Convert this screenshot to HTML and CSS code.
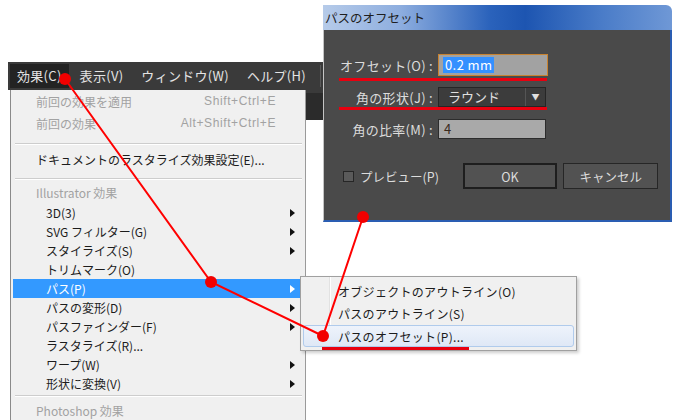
FILE: index.html
```html
<!DOCTYPE html>
<html lang="ja">

<head>
    <meta charset="UTF-8">
    <meta name="viewport" content="width=device-width, initial-scale=1.0">
    <title>パスのオフセット</title>
    <link rel="stylesheet" href="styles.css">
</head>

<body>
    <div class="stage">
        <div class="workspace">
            <div class="menubar">
                <span class="menubar-item active">効果(C)</span>
                <span class="menubar-item">表示(V)</span>
                <span class="menubar-item">ウィンドウ(W)</span>
                <span class="menubar-item">ヘルプ(H)</span>
                <span class="menubar-sep"></span>
            </div>
            <div class="under-bar">
                <div class="menu">
                    <div class="menu-item disabled first">
                        <span>前回の効果を適用</span><span class="shortcut">Shift+Ctrl+E</span>
                    </div>
                    <div class="menu-item disabled second">
                        <span>前回の効果</span><span class="shortcut">Alt+Shift+Ctrl+E</span>
                    </div>
                    <div class="menu-sep sep-a"></div>
                    <div class="menu-item">ドキュメントのラスタライズ効果設定(E)...</div>
                    <div class="menu-sep sep-b"></div>
                    <div class="menu-item heading">Illustrator 効果</div>
                    <div class="menu-item sub arrow first-sub">3D(3)</div>
                    <div class="menu-item sub arrow">SVG フィルター(G)</div>
                    <div class="menu-item sub arrow">スタイライズ(S)</div>
                    <div class="menu-item sub">トリムマーク(O)</div>
                    <div class="menu-item sub arrow selected">パス(P)</div>
                    <div class="menu-item sub arrow">パスの変形(D)</div>
                    <div class="menu-item sub arrow">パスファインダー(F)</div>
                    <div class="menu-item sub">ラスタライズ(R)...</div>
                    <div class="menu-item sub arrow">ワープ(W)</div>
                    <div class="menu-item sub arrow">形状に変換(V)</div>
                    <div class="menu-sep sep-c"></div>
                    <div class="menu-item heading">Photoshop 効果</div>
                </div>
                <div class="doc-strip"></div>
            </div>
        </div>

        <!-- submenu of パス(P) -->
        <div class="submenu">
            <div class="submenu-item">オブジェクトのアウトライン(O)</div>
            <div class="submenu-item">パスのアウトライン(S)</div>
            <div class="submenu-item hover">パスのオフセット(P)...</div>
        </div>

        <!-- offset dialog -->
        <div class="dialog">
            <div class="dialog-title">パスのオフセット</div>
            <div class="dialog-body">
                <div class="field-row row-offset">
                    <label class="field-label">オフセット(O) :</label>
                    <div class="text-field focused"><span class="selection">0.2 mm</span></div>
                </div>
                <div class="field-row row-join">
                    <label class="field-label">角の形状(J) :</label>
                    <div class="select-field">
                        <span class="select-value">ラウンド</span>
                        <span class="select-arrow">▼</span>
                    </div>
                </div>
                <div class="field-row row-limit">
                    <label class="field-label">角の比率(M) :</label>
                    <div class="text-field">4</div>
                </div>
                <div class="button-row">
                    <div class="preview">
                        <span class="checkbox"></span>
                        <span>プレビュー(P)</span>
                    </div>
                    <button class="dlg-button default">OK</button>
                    <button class="dlg-button">キャンセル</button>
                </div>
            </div>
        </div>

        <!-- red annotations drawn over the screenshot -->
        <svg class="marks" width="680" height="420" viewBox="0 0 680 420">
            <rect x="339" y="78" width="208" height="3" fill="#e8000f" />
            <rect x="339" y="107" width="208" height="3" fill="#e8000f" />
            <rect x="322" y="347" width="147" height="3" fill="#e8000f" />
            <polyline points="65,79 211,282 323,336 363,217" fill="none" stroke="#ff0000" stroke-width="2" />
            <circle cx="65" cy="79" r="6" fill="#f20000" />
            <circle cx="211" cy="282" r="6" fill="#f20000" />
            <circle cx="323" cy="336" r="6" fill="#f20000" />
            <circle cx="363" cy="217" r="6" fill="#f20000" />
        </svg>
    </div>
</body>

</html>
```

FILE: styles.css
```css
body {
    margin: 0;
    padding: 0;
    background-color: #fff;
    font-family: "Noto Sans CJK JP", "Noto Sans", sans-serif;
    font-size: 12px;
}

.stage {
    position: relative;
    width: 680px;
    height: 420px;
    overflow: hidden;
}

.workspace {
    padding: 62px 0 0 8px;
}

/* menu bar */

.menubar {
    display: flex;
    align-items: center;
    gap: 4px;
    width: 313px;
    height: 28px;
    padding: 0 2px;
    background-color: #3a3a3a;
}

.menubar-item {
    height: 24px;
    line-height: 24px;
    padding: 0 7px;
    color: #e4e4e4;
    font-size: 13px;
    letter-spacing: 0.3px;
    white-space: nowrap;
}

.menubar-item.active {
    background-color: #232323;
}

.menubar-sep {
    width: 1px;
    height: 22px;
    margin-left: auto;
    margin-right: 2px;
    background-color: #5a5a5a;
}

.under-bar {
    display: flex;
    padding-left: 2px;
}

/* effect menu */

.menu {
    width: 294px;
    height: 340px;
    padding-top: 2px;
    background-color: #f0f0f0;
    border-left: 1px solid #8a8a8a;
    border-right: 1px solid #9a9a9a;
}

.menu-item {
    display: flex;
    justify-content: space-between;
    height: 19px;
    line-height: 19px;
    margin: 0 2px;
    padding: 0 27px 0 23px;
    color: #1c1c1c;
    position: relative;
}

.menu-item.second {
    margin-top: 3px;
}

.menu-item.disabled,
.menu-item.heading {
    color: #a2a2a2;
}

.menu-item.sub {
    padding-left: 33px;
}

.menu-item.first-sub {
    margin-top: 1px;
}

.menu-item.arrow::after {
    content: "";
    position: absolute;
    right: 8px;
    top: 6px;
    border-left: 5px solid #111;
    border-top: 4px solid transparent;
    border-bottom: 4px solid transparent;
}

.menu-item.selected {
    background-color: #3399ff;
    color: #fff;
}

.menu-item.selected::after {
    border-left-color: #fff;
}

.shortcut {
    font-family: "Liberation Sans", sans-serif;
    font-size: 12px;
    letter-spacing: 0.6px;
}

.menu-sep {
    height: 1px;
    margin: 10px 3px 5px 4px;
    background-color: #cdcdcd;
    border-bottom: 1px solid #fff;
}

.sep-b {
    margin: 9px 3px 3px 4px;
}

.sep-c {
    margin: 2px 3px 4px 4px;
}

.doc-strip {
    width: 18px;
    height: 27px;
    background-color: #2b2b2b;
    border-top: 3px solid #3a3a3a;
    border-right: 1px solid #bdbdbd;
}

/* submenu */

.submenu {
    position: absolute;
    left: 300px;
    top: 276px;
    width: 271px;
    height: 69px;
    padding: 4px 2px 0 2px;
    background-color: #f0f0f0;
    border: 1px solid #a0a0a0;
    box-shadow: 2px 2px 3px rgba(0, 0, 0, 0.2);
    background-image: linear-gradient(to right, transparent 28px, #e2e2e2 28px, #e2e2e2 29px, #fff 29px, #fff 30px, transparent 30px);
}

.submenu-item {
    height: 22px;
    line-height: 21px;
    padding-left: 35px;
    color: #1c1c1c;
    letter-spacing: 0.3px;
    box-sizing: border-box;
}

.submenu-item.hover {
    background: linear-gradient(#eef3fb, #dfe8f6);
    border: 1px solid #b0cbec;
    border-radius: 3px;
    padding-left: 34px;
}

/* dialog */

.dialog {
    position: absolute;
    left: 323px;
    top: 5px;
    width: 349px;
}

.dialog-title {
    height: 25px;
    line-height: 25px;
    padding-left: 2px;
    color: #1e1e1e;
    font-size: 12.5px;
    border-top-right-radius: 6px;
    background: linear-gradient(to right, #b6cbe9 0%, #8eaedf 22%, #2a62bb 48%, #1d55b1 58%, #4a7cc8 80%, #6f98d6 100%);
}

.dialog-body {
    height: 166px;
    padding: 24px 12px 0 14px;
    background-color: #4a4a4a;
    border-left: 1px solid #c4c4c4;
    border-right: 2px solid #2a5db2;
    border-bottom: 2px solid #2a5db2;
    color: #dcdcdc;
    font-size: 13px;
}

.field-row {
    display: flex;
    align-items: center;
    gap: 5px;
}

.row-join {
    margin-top: 11px;
}

.row-limit {
    margin-top: 12px;
}

.field-label {
    width: 95px;
    text-align: right;
    white-space: nowrap;
    letter-spacing: 0.3px;
}

.text-field {
    box-sizing: border-box;
    width: 108px;
    height: 20px;
    line-height: 18px;
    padding-left: 5px;
    background-color: #a9a9a9;
    border: 1px solid #2c2c2c;
    color: #3a2a1e;
}

.text-field.focused {
    width: 110px;
    height: 22px;
    padding: 2px 0 0 4px;
    line-height: 16px;
    background-color: #a2a2a2;
    border-color: #c98330;
}

.selection {
    display: inline-block;
    padding: 0 2px;
    background-color: #3390ff;
    color: #fff;
    letter-spacing: 0.4px;
}

.select-field {
    box-sizing: border-box;
    display: flex;
    justify-content: space-between;
    width: 108px;
    height: 20px;
    line-height: 18px;
    padding-left: 9px;
    background-color: #3c3c3c;
    border: 1px solid #262626;
    color: #e0e0e0;
}

.select-arrow {
    width: 19px;
    text-align: center;
    font-size: 8px;
    border-left: 1px solid #555;
}

.button-row {
    display: flex;
    align-items: center;
    gap: 6px;
    margin-top: 24px;
}

.preview {
    display: flex;
    align-items: center;
    gap: 6px;
    width: 120px;
    padding-left: 5px;
    margin-right: -6px;
    font-size: 12.5px;
}

.checkbox {
    box-sizing: border-box;
    width: 11px;
    height: 11px;
    background-color: #5a5a5a;
    border: 1px solid #262626;
}

.dlg-button {
    box-sizing: border-box;
    width: 95px;
    height: 26px;
    background-color: #525252;
    border: 1px solid #262626;
    color: #dcdcdc;
    font-family: "Noto Sans CJK JP", "Noto Sans", sans-serif;
    font-size: 12.5px;
}

.dlg-button.default {
    border: 2px solid #1e1e1e;
}

.marks {
    position: absolute;
    left: 0;
    top: 0;
    pointer-events: none;
}
```
